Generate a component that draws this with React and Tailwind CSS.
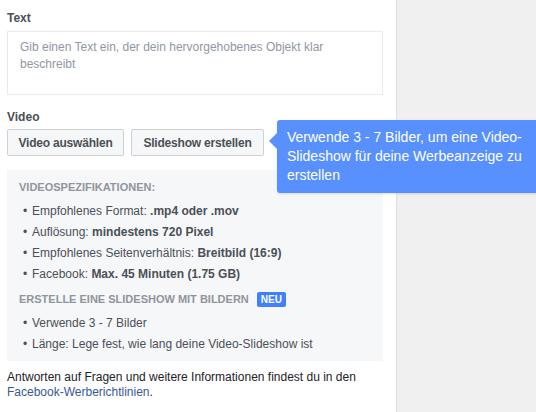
export default function App() {
  const specs = [
    { label: 'Empfohlenes Format: ', value: '.mp4 oder .mov' },
    { label: 'Auflösung: ', value: 'mindestens 720 Pixel' },
    { label: 'Empfohlenes Seitenverhältnis: ', value: 'Breitbild (16:9)' },
    { label: 'Facebook: ', value: 'Max. 45 Minuten (1.75 GB)' },
  ];

  const slideshow = ['Verwende 3 - 7 Bilder', 'Länge: Lege fest, wie lang deine Video-Slideshow ist'];

  return (
    <div className="relative flex h-[412px] w-[536px] overflow-hidden bg-white font-['Liberation_Sans',Arial,sans-serif] text-[12px] text-[#1d2129]">
      {/* Left form column */}
      <div className="w-[397px] shrink-0 border-r border-[#dddfe2] pl-[7px] pr-[13px] pt-[10px]">
        <div className="mb-[5px] leading-4 font-bold text-[#4b4f56]">Text</div>
        <div className="h-[64px] border border-[#e9eaed] px-[12px] pt-[7px] leading-[17px] text-[#9197a3]">
          Gib einen Text ein, der dein hervorgehobenes Objekt klar beschreibt
        </div>

        <div className="mt-[14px] mb-[4px] leading-4 font-bold text-[#4b4f56]">Video</div>
        <div className="relative flex gap-[7px]">
          <button className="h-[27px] w-[117px] rounded-[2px] border border-[#ced0d4] bg-[#f6f7f9] font-bold tracking-[-0.2px] text-[#4b4f56]">
            Video auswählen
          </button>
          <button className="h-[27px] w-[133px] rounded-[2px] border border-[#ced0d4] bg-[#f6f7f9] font-bold tracking-[-0.2px] text-[#4b4f56]">
            Slideshow erstellen
          </button>

          {/* Tooltip */}
          <div className="absolute left-[270px] top-[-9px] z-10 w-[290px] rounded-[3px] bg-[#5890ff] py-[8px] pl-[10px] pr-[30px] text-[14px] leading-[19px] text-white shadow-sm">
            <div className="absolute left-[-8px] top-[13px] h-0 w-0 border-y-[8px] border-r-[8px] border-y-transparent border-r-[#5890ff]" />
            Verwende 3 - 7 Bilder, um eine Video-Slideshow für deine Werbeanzeige zu erstellen
          </div>
        </div>

        <div className="mt-[14px] bg-[#f6f7f9] pb-[7px] pl-[12px] pt-[9px]">
          <div className="mb-[5px] text-[11px] leading-4 font-bold text-[#90949c]">
            VIDEOSPEZIFIKATIONEN:
          </div>
          <ul className="text-[#4b4f56]">
            {specs.map((s) => (
              <li key={s.label} className="flex h-[21px] items-center">
                <span className="w-[13px] pl-[4px]">•</span>
                <span>
                  {s.label}
                  <span className="font-bold">{s.value}</span>
                </span>
              </li>
            ))}
          </ul>
          <div className="mt-[7px] mb-[5px] flex items-center gap-[8px] text-[11px] leading-4 font-bold text-[#90949c]">
            ERSTELLE EINE SLIDESHOW MIT BILDERN
            <span className="rounded-[2px] bg-[#4080ff] px-[4px] text-[10px] leading-[15px] text-white">NEU</span>
          </div>
          <ul className="text-[#4b4f56]">
            {slideshow.map((s) => (
              <li key={s} className="flex h-[21px] items-center">
                <span className="w-[13px] pl-[4px]">•</span>
                <span>{s}</span>
              </li>
            ))}
          </ul>
        </div>

        <p className="mt-[9px] leading-[15px] text-[#1d2129]">
          Antworten auf Fragen und weitere Informationen findest du in den{' '}
          <a className="text-[#365899]">Facebook-Werberichtlinien</a>.
        </p>
      </div>

      {/* Right grey area */}
      <div className="flex-1 bg-[#f0f0f0]" />
    </div>
  );
}
